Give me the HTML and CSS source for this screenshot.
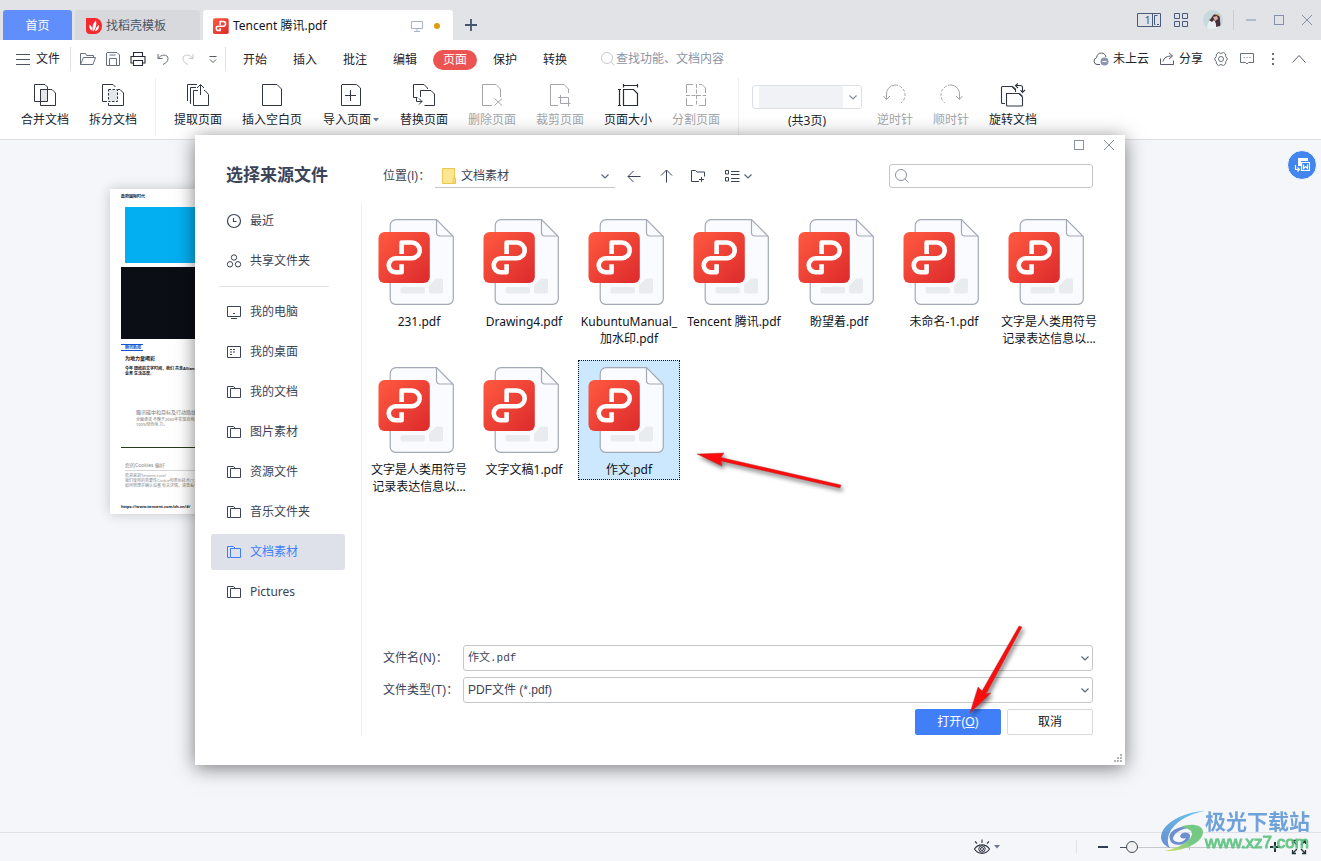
FILE: index.html
```html
<!DOCTYPE html>
<html lang="zh-CN">
<head>
<meta charset="utf-8">
<title>Tencent 腾讯.pdf</title>
<link rel="stylesheet" href="styles.css">
</head>
<body>
<svg class="defs" aria-hidden="true">
  <defs>
    <linearGradient id="red" x1="0" y1="0" x2="1" y2="1"><stop offset="0" stop-color="#ff5a40"/><stop offset="1" stop-color="#dc2a2c"/></linearGradient>
    <linearGradient id="swirl-blue" x1="0" y1="1" x2="1" y2="0"><stop offset="0" stop-color="#5b86cf"/><stop offset="1" stop-color="#5cc8f0"/></linearGradient>
    <linearGradient id="swirl-green" x1="0" y1="1" x2="1" y2="0"><stop offset="0" stop-color="#d8e05a"/><stop offset=".5" stop-color="#6cc67c"/><stop offset="1" stop-color="#6cc67c"/></linearGradient>
  </defs>
  <symbol id="pdf-file" viewBox="0 0 76 86">
    <path d="M18 .7H58.5L75.3 17.500V80a5.300 5.300 0 0 1-5.300 5.300H17.500a5.300 5.300 0 0 1-5.300-5.300V6.500A5.800 5.800 0 0 1 18 .7z" fill="#fafbfe" stroke="#a3a9b5" stroke-width="1.200"/>
    <path d="M58.500 1v12.500a3.500 3.500 0 0 0 3.500 3.500h13" fill="none" stroke="#a3a9b5" stroke-width="1.200"/>
    <rect x="22.500" y="68" width="24.500" height="6.500" rx="2" fill="#e9ecef"/>
    <path d="M58 59.500h5.500a1.500 1.500 0 0 1 1.500 1.500v11.500a2 2 0 0 1-2 2H53a2 2 0 0 1-2-2v-6z" fill="#e9ecef"/>
    <rect x=".5" y="13" width="51.300" height="51" rx="6" fill="url(#red)"/>
    <path d="M23.600 35V23.500h10.200a7.900 7.900 0 0 1 0 15.800H17.700a7 7 0 0 0 0 14h5.900v-8" fill="none" stroke="#fff" stroke-width="4.600" stroke-linejoin="round"/>
  </symbol>
  <symbol id="folders" viewBox="0 0 16 16"><path d="M4 13.500H1.500v-11h6l2 2M4.500 13.500v-9h10v9z" fill="none" stroke="currentColor"/></symbol>
  <symbol id="chevron" viewBox="0 0 12 12"><path d="M2.500 4.500 6 8l3.500-3.500" fill="none" stroke="currentColor" stroke-width="1.200"/></symbol>
  <symbol id="caret" viewBox="0 0 6 4"><path d="M0 0h6L3 3.500z" fill="currentColor"/></symbol>
  <symbol id="search" viewBox="0 0 16 16"><circle cx="7" cy="7" r="5.500" fill="none" stroke="currentColor"/><path d="m11 11 3.500 3.500" stroke="currentColor"/></symbol>
  <symbol id="square" viewBox="0 0 12 12"><rect x="1.500" y="1.500" width="9" height="9" fill="none" stroke="currentColor"/></symbol>
  <symbol id="cross" viewBox="0 0 12 12"><path d="m1 1 10 10M11 1 1 11" stroke="currentColor"/></symbol>
</svg>

<header class="tabbar">
  <button class="tab tab-home">首页</button>
  <button class="tab tab-template">
    <svg width="16" height="16" viewBox="0 0 16 16"><path d="M0 0h9a7 8 0 0 1 0 16H4a4 4 0 0 1-4-4z" fill="#f8282f"/><path d="M7.500 13.500C5.500 9.500 7 5 10 2.500c1 4-.2 8-2.500 11zM6.500 13C3.500 11.500 3 9 3.500 6.500 5.500 8 6.500 10 6.500 13zM9 13.300c.5-3 2-5 4-6.300.3 3-1 5.500-4 6.300z" fill="#fff"/></svg>
    <span>找稻壳模板</span>
  </button>
  <button class="tab tab-active">
    <svg width="16" height="16" viewBox="0 12 53 53"><rect x="0" y="13" width="52" height="52" rx="6" fill="url(#red)"/><path d="M23.600 35V23.500h10.200a7.900 7.900 0 0 1 0 15.800H17.700a7 7 0 0 0 0 14h5.900v-8" fill="none" stroke="#fff" stroke-width="5"/></svg>
    <span class="grow">Tencent 腾讯.pdf</span>
    <svg class="tab-screen" width="12" height="12" viewBox="0 0 12 12"><path d="M.5 1.500h11v7H.5zM6 8.500v3M3 11.500h6" fill="none" stroke="currentColor"/></svg>
    <i class="dot"></i>
  </button>
  <button class="new-tab" aria-label="新建"><svg width="12" height="12" viewBox="0 0 12 12"><path d="M6 0v12M0 6h12" stroke="#44546f" stroke-width="1.800"/></svg></button>
  <div class="window-tools">
    <button aria-label="窗口"><svg width="24" height="16" viewBox="0 0 24 16"><path d="M.5 1.500h23v13H.5zM15.500 1.500v13M20.500 3.500h-3v9h1M20 12.500h2" fill="none" stroke="#4a5a7c"/><text x="7.500" y="12" class="one">1</text></svg></button>
    <button aria-label="应用"><svg width="16" height="16" viewBox="0 0 16 16"><path d="M1.500 1.500h5v5h-5zM9.500 1.500h5v5h-5zM1.500 9.500h5v5h-5zM9.500 9.500h5v5h-5z" fill="none" stroke="#4a5a7c"/></svg></button>
    <svg class="avatar" width="20" height="20" viewBox="0 0 20 20"><circle cx="10" cy="10" r="10" fill="#c6dade"/><path d="M4 18c0-5 2-7 5-9l6 3 1 5a10 10 0 0 1-12 1z" fill="#e6eff2"/><path d="M6 10c3-1 3-6 7-6 4 .5 4 4 4 6 0 3 1 4 0 6l-4 1c.5-3-.5-5-2-7l-2 2z" fill="#4a3138"/><path d="m10 7 4-1 1 3-3 2z" fill="#dcaea4"/><path d="m12 4 4 1.500" stroke="#d8b75a"/></svg>
  </div>
  <div class="window-controls">
    <button aria-label="最小化"><svg width="12" height="12"><path d="M1 6h10" stroke="currentColor"/></svg></button>
    <button aria-label="最大化"><svg width="12" height="12"><use href="#square"/></svg></button>
    <button aria-label="关闭"><svg width="12" height="12"><use href="#cross"/></svg></button>
  </div>
</header>

<nav class="menubar">
  <button class="file-menu"><svg width="14" height="12" viewBox="0 0 14 12"><path d="M0 1.500h14M0 6.500h14M0 11.500h14" stroke="#4d5463"/></svg>文件</button>
  <div class="quick">
    <button aria-label="打开"><svg width="16" height="16" viewBox="0 0 16 16"><path d="M.5 13.500v-11h5l1 2h7v2M.5 13.500l3-7h12l-2.500 7z" fill="none" stroke="#69707d"/></svg></button>
    <button aria-label="保存"><svg width="16" height="16" viewBox="0 0 16 16"><path d="M2 1.500h10l2.500 2.500v10.500h-13V2zM4.500 14V7.500h7V14M4.500 4h6" fill="none" stroke="#69707d"/></svg></button>
    <button aria-label="打印"><svg width="16" height="16" viewBox="0 0 16 16"><path d="M3.500 5V1.500h9V5M3.500 12H1V5.500h14V12h-2.500M3.500 9.500h9v5h-9z" fill="none" stroke="#262b36" stroke-width="1.100"/></svg></button>
    <button aria-label="撤销"><svg width="14" height="14" viewBox="0 0 14 14"><path d="M2 2v4.500h4.500M2 6.500C5 2 12 2 12 6.500c0 3-2 4.500-5 6" fill="none" stroke="#69707d"/></svg></button>
    <button aria-label="重做"><svg width="14" height="14" viewBox="0 0 14 14"><path d="M12 2v4.500H7.500M12 6.500C9 2 2 2 2 6.500c0 3 2 4.500 5 6" fill="none" stroke="#c6c9ce"/></svg></button>
    <button aria-label="更多"><svg width="10" height="10" viewBox="0 0 10 10"><path d="M1.500 2.500h7M2 5.500l3 3 3-3" fill="none" stroke="#555c69"/></svg></button>
  </div>
  <div class="menus">
    <button>开始</button><button>插入</button><button>批注</button><button>编辑</button><button class="current"><span>页面</span></button><button>保护</button><button>转换</button>
  </div>
  <button class="find"><svg width="16" height="16"><use href="#search"/></svg>查找功能、文档内容</button>
  <div class="menu-right">
    <button class="cloud"><svg width="16" height="14" viewBox="0 0 16 14"><path d="M7 12.500H4a3.500 3.500 0 0 1-.5-6.800C4 2.500 6 1 8.300 1c2.500 0 4.200 1.800 4.700 4" fill="none" stroke="#555c69"/><circle cx="11.500" cy="9.500" r="4" fill="#8c96b0"/><path d="M9.500 9.500h4" stroke="#fff"/></svg>未上云</button>
    <button class="share"><svg width="15" height="14" viewBox="0 0 15 14"><path d="M.5 6.500v6h13v-4M3 9.500C4 5.500 7 4 12 4M9 .8 12.500 4 9 7.200" fill="none" stroke="#555c69"/></svg>分享</button>
    <button class="tool" aria-label="设置"><svg width="16" height="16" viewBox="0 0 16 16"><path d="m5.500 1.500 2.500 1 2.500-1 2 1.500.3 2.500L14.500 8l-1.700 2.500-.3 2.500-2 1.500-2.500-1-2.500 1-2-1.500-.3-2.500L1.500 8l1.700-2.500L3.500 3z" fill="none" stroke="#69707d"/><circle cx="8" cy="8" r="2.500" fill="none" stroke="#69707d"/></svg></button>
    <button class="tool" aria-label="批注"><svg width="16" height="16" viewBox="0 0 16 16"><path d="M1.500 2.500h13v9H9.500l-1.500 1.500-1.500-1.500h-5z" fill="none" stroke="#69707d"/><path d="M4.500 6.500h7" stroke="#69707d" stroke-dasharray="1 2"/></svg></button>
    <button class="tool" aria-label="更多"><svg width="4" height="12"><path d="M1 0h2v2H1zM1 5h2v2H1zM1 10h2v2H1z" fill="#69707d"/></svg></button>
    <button class="tool" aria-label="收起"><svg width="14" height="8"><path d="m.5 7.500 6.500-7 6.500 7" fill="none" stroke="#555c69"/></svg></button>
  </div>
</nav>

<section class="ribbon">
  <div class="group group-first">
    <button class="cmd"><svg width="24" height="24" viewBox="0 0 24 24"><path d="M7.500 18.500h-6v-17H12L14.500 4v2.500M7.500 6.500H19l3.500 3.500v12.500h-15z" fill="none" stroke="#303643"/><path d="M7.500 6.500h7v12h-7z" fill="#e4e6ea" stroke="#303643"/></svg>合并文档</button>
    <button class="cmd"><svg width="24" height="24" viewBox="0 0 24 24"><path d="M6 18.500H1.500v-17H12L14.500 4M17 6.500h2l3.500 3.500v12.500h-15V20" fill="none" stroke="#303643"/><path d="M7.500 6.500h9v12h-9z" fill="#e4e6ea" stroke="#303643" stroke-dasharray="2.500 1.500"/></svg>拆分文档</button>
  </div>
  <div class="group group-pages">
    <button class="cmd"><svg width="24" height="24" viewBox="0 0 24 24"><path d="M1.500 18V1.500H11M4.500 21V4.500H10M12 7.500H7.500v15h15V11.500l-3.500-4h-1M14.500 12V2M11 5l3.500-3.500L18 5" fill="none" stroke="#303643"/></svg>提取页面</button>
    <button class="cmd cmd-wide"><svg width="24" height="24" viewBox="0 0 24 24"><path d="M2.500 1.500H17L21.500 6v16.500h-19z" fill="none" stroke="#303643"/></svg>插入空白页</button>
    <button class="cmd cmd-menu"><svg width="24" height="24" viewBox="0 0 24 24"><path d="M3 1.500h14.500L21.500 5v17.500h-19V2zM11.500 7v11M6 12.500h11" fill="none" stroke="#303643"/></svg><span>导入页面<svg class="more" width="6" height="4"><use href="#caret"/></svg></span></button>
    <button class="cmd"><svg width="24" height="24" viewBox="0 0 24 24"><path d="M5.500 14.500h-4v-13H12L15.500 5v1M8.500 14V7.500H19l3.500 3.500v11.500h-10M4.500 15v3.500H10M7 15.500l3 3-3 3" fill="none" stroke="#303643"/></svg>替换页面</button>
    <button class="cmd off"><svg width="24" height="24" viewBox="0 0 24 24"><path d="M12 22.500H2.500v-21H16L20.500 6v8M14.500 15.500l7.500 7M22 15.500l-7.500 7" fill="none" stroke="currentColor"/></svg>删除页面</button>
    <button class="cmd off"><svg width="24" height="24" viewBox="0 0 24 24"><path d="M10 22.500H2.500v-21H16L20.500 6v4M12.500 12v8.500h10M10 14.500h10.500v9" fill="none" stroke="currentColor"/></svg>裁剪页面</button>
    <button class="cmd"><svg width="24" height="24" viewBox="0 0 24 24"><path d="M7.500 6.500h10l4 4v12h-14zM7 2.500h14.500M7.500 1v3.500M21.500 1v3.500M3.500 6v17M2 6.500h3M2 22.500h3" fill="none" stroke="#262b36" stroke-width="1.200"/></svg>页面大小</button>
    <button class="cmd off"><svg width="24" height="24" viewBox="0 0 24 24"><path d="M9 1.500H2.500V10M2.500 15v7.500H9M15 1.500h3L21.500 5v5M21.500 15v7.500H15" fill="none" stroke="currentColor"/><path d="M12.500 1v22M2 12.500h20" fill="none" stroke="currentColor" stroke-dasharray="4 1.500"/></svg>分割页面</button>
  </div>
  <div class="group group-rotate">
    <div class="page-pick">
      <button class="page-box" aria-label="页码"><span></span><svg width="12" height="12"><use href="#chevron"/></svg></button>
      <div>(共3页)</div>
    </div>
    <button class="cmd cmd-slim off"><svg width="24" height="24" viewBox="0 0 24 24"><path d="M3.500 16v-4a9 9 0 0 1 8.500-10" fill="none" stroke="currentColor"/><path d="M12 2a10 10 0 0 1 6 18" fill="none" stroke="currentColor" stroke-dasharray="3 1.500"/><path d="m.5 13 3 3.500 3.500-3.500" fill="none" stroke="currentColor"/></svg>逆时针</button>
    <button class="cmd cmd-slim off"><svg width="24" height="24" viewBox="0 0 24 24"><path d="M20.500 16v-4a9 9 0 0 0-8.500-10" fill="none" stroke="currentColor"/><path d="M12 2a10 10 0 0 0-6 18" fill="none" stroke="currentColor" stroke-dasharray="3 1.500"/><path d="m23.500 13-3 3.500-3.500-3.500" fill="none" stroke="currentColor"/></svg>顺时针</button>
    <button class="cmd"><svg width="26" height="24" viewBox="0 0 26 24"><path d="M5 20.500H2.500a1 1 0 0 1-1-1v-15a1 1 0 0 1 1-1h10L15.500 6v3M6.500 10.500H19l3.500 3.500v8a1 1 0 0 1-1 1h-14a1 1 0 0 1-1-1zM12 3.500l3 3M19.500 10.500l3 3" fill="none" stroke="#303643" stroke-width="1.100"/><path d="M16 2.500h4.500a2 2 0 0 1 2 2V9M18 .5l-2.500 2L18 5M20.500 7l2 2.500L25 7" fill="none" stroke="#303643" stroke-width="1.100"/></svg>旋转文档</button>
  </div>
</section>

<main class="workspace">
  <article class="thumb">
    <p class="thumb-head">政府国际时代</p>
    <div class="thumb-blue"></div>
    <div class="thumb-dark"></div>
    <p class="thumb-tag">腾讯新闻</p>
    <h2>为地力量喝彩</h2>
    <p class="thumb-bold">今年 团结的文字时间，我们 共走Alliance的Hot.cat的文字</p>
    <p class="thumb-bold">业务 生活态度。</p>
    <div class="thumb-quote"><h3>腾讯碳中和目标及行动路线报告</h3><p>全面承诺 不晚于2030年实现自身运营及供应链</p><p>100%绿色电 力。</p></div>
    <div class="thumb-rule"></div>
    <div class="thumb-note"><h3>您的Cookies 偏好</h3><p>欢迎来到Tencent.com!</p><p>我们使用的重要性Cookie和类似技术("Cookie")来改善您的体验</p><p>如何管理并确认设置 有关详情，请查看我们的Cookie政策</p></div>
    <p class="thumb-foot">https://www.tencent.com/zh-cn/#/</p>
  </article>
  <button class="float" aria-label="转为Word"><svg width="16" height="16" viewBox="0 0 16 16"><path d="M4 1h10v3H7v5H4z" fill="#fff"/><path d="M7.500 5.500h8v8h-8zM9.500 7.500v4l2-2 2 2v-4M1.500 8v4.500H6M3.500 10.500l2 2-2 2" fill="none" stroke="#fff" stroke-width="1.200"/></svg></button>
</main>

<footer class="statusbar">
  <button class="eye" aria-label="视图"><svg width="16" height="16" viewBox="0 0 16 16"><path d="M.5 10C4 4.500 12 4.500 15.500 10 12 15.800 4 15.800.5 10zM8 4V.5M3 4.500 1 2.500M13 4.500l2-2" fill="none" stroke="#303643" stroke-width="1.100"/><circle cx="8" cy="10" r="3.200" fill="none" stroke="#303643"/><circle cx="8" cy="10" r="1.500" fill="none" stroke="#303643"/></svg><svg class="more" width="6" height="4"><use href="#caret"/></svg></button>
  <div class="zoom">
    <button aria-label="缩小"><svg width="10" height="10"><path d="M0 5h10" stroke="#303c55" stroke-width="2"/></svg></button>
    <input type="range" min="0" max="100" value="5" aria-label="缩放">
    <button aria-label="放大"><svg width="10" height="10"><path d="M0 5h10M5 0v10" stroke="#22333a" stroke-width="2"/></svg></button>
    <button aria-label="全屏"><svg width="16" height="16" viewBox="0 0 16 16"><path d="M1.500 5V1.500H5M11 1.500h3.500V5M14.500 11v3.500H11M5 14.500H1.500V11M2 2l4 4M14 2l-4 4M14 14l-4-4M2 14l4-4" fill="none" stroke="#22333a" stroke-width="1.300"/></svg></button>
  </div>
</footer>

<section class="dialog" role="dialog" aria-labelledby="dialog-title">
  <div class="dialog-controls">
    <button aria-label="最大化"><svg width="12" height="12"><use href="#square"/></svg></button>
    <button aria-label="关闭"><svg width="12" height="12"><use href="#cross"/></svg></button>
  </div>
  <div class="dialog-head">
    <h1 id="dialog-title">选择来源文件</h1>
    <label for="place">位置(I)：</label>
    <div class="place">
      <svg width="14" height="16" viewBox="0 0 14 16"><path d="M.5.500h12v9l1 1v5H.5z" fill="#ffe694" stroke="#ebc64f"/><path d="M11 15v-5l2-1v6z" fill="#ffdf7c" stroke="#ebc64f" stroke-width=".8"/></svg>
      <select id="place"><option>文档素材</option></select>
      <svg class="drop" width="12" height="12"><use href="#chevron"/></svg>
    </div>
    <div class="nav-tools">
      <button aria-label="后退"><svg width="14" height="14" viewBox="0 0 14 14"><path d="M13.500 7.500H1M6.500 2 1 7.500 6.500 13" fill="none" stroke="currentColor"/></svg></button>
      <button aria-label="向上"><svg width="14" height="14" viewBox="0 0 14 14"><path d="M7.500 13.500V1M2 6.500 7.500 1 13 6.500" fill="none" stroke="currentColor"/></svg></button>
      <button aria-label="新建文件夹"><svg width="14" height="14" viewBox="0 0 14 14"><path d="M8 12.500H.5V1.500h4l1.500 1.500h7.500v4.500M10.500 8v5M8 10.500h5" fill="none" stroke="currentColor"/></svg></button>
      <button class="view" aria-label="视图"><svg width="15" height="12" viewBox="0 0 15 12"><path d="M.5.500h3v3.500h-3zM.5 7.500h3V11h-3zM6 1.500h8.500M6 4.500h8.500M6 8.500h8.500M6 11.500h8.500" fill="none" stroke="currentColor"/></svg><svg class="drop" width="12" height="12"><use href="#chevron"/></svg></button>
    </div>
    <div class="search"><svg width="16" height="16"><use href="#search"/></svg><input type="text" aria-label="搜索"></div>
  </div>
  <div class="dialog-body">
    <nav class="side">
      <button><svg width="16" height="16" viewBox="0 0 16 16"><circle cx="8" cy="8" r="6.500" fill="none" stroke="currentColor" stroke-width="1.200"/><path d="M7.500 5v3.500h3" fill="none" stroke="currentColor" stroke-width="1.100"/></svg>最近</button>
      <button><svg width="16" height="16" viewBox="0 0 16 16"><circle cx="8" cy="4.500" r="2.700" fill="none" stroke="currentColor"/><circle cx="4" cy="11.300" r="2.700" fill="none" stroke="currentColor"/><circle cx="12" cy="11.300" r="2.700" fill="none" stroke="currentColor"/></svg>共享文件夹</button>
      <hr>
      <button><svg width="16" height="16" viewBox="0 0 16 16"><path d="M1.500 2.500h13v10h-13zM5 14.500h6M7 9.500h2" fill="none" stroke="currentColor"/></svg>我的电脑</button>
      <button><svg width="16" height="16" viewBox="0 0 16 16"><path d="M1.500 2.500h13v11h-13z" fill="none" stroke="currentColor"/><path d="M4 5.500h5M4 8h5M4 10.500h2.500" stroke="currentColor" stroke-dasharray="2 1"/></svg>我的桌面</button>
      <button><svg width="16" height="16"><use href="#folders"/></svg>我的文档</button>
      <button><svg width="16" height="16"><use href="#folders"/></svg>图片素材</button>
      <button><svg width="16" height="16"><use href="#folders"/></svg>资源文件</button>
      <button><svg width="16" height="16"><use href="#folders"/></svg>音乐文件夹</button>
      <button class="selected"><svg width="16" height="16"><use href="#folders"/></svg>文档素材</button>
      <button><svg width="16" height="16"><use href="#folders"/></svg>Pictures</button>
    </nav>
    <div class="content">
      <div class="files">
        <button class="file"><svg width="76" height="86"><use href="#pdf-file"/></svg>231.pdf</button>
        <button class="file"><svg width="76" height="86"><use href="#pdf-file"/></svg>Drawing4.pdf</button>
        <button class="file"><svg width="76" height="86"><use href="#pdf-file"/></svg>KubuntuManual_<br>加水印.pdf</button>
        <button class="file"><svg width="76" height="86"><use href="#pdf-file"/></svg>Tencent 腾讯.pdf</button>
        <button class="file"><svg width="76" height="86"><use href="#pdf-file"/></svg>盼望着.pdf</button>
        <button class="file"><svg width="76" height="86"><use href="#pdf-file"/></svg>未命名-1.pdf</button>
        <button class="file"><svg width="76" height="86"><use href="#pdf-file"/></svg>文字是人类用符号<br>记录表达信息以...</button>
        <button class="file"><svg width="76" height="86"><use href="#pdf-file"/></svg>文字是人类用符号<br>记录表达信息以...</button>
        <button class="file"><svg width="76" height="86"><use href="#pdf-file"/></svg>文字文稿1.pdf</button>
        <button class="file file-on"><svg width="76" height="86"><use href="#pdf-file"/></svg>作文.pdf</button>
      </div>
      <form class="fields">
        <label for="name">文件名(N)：</label>
        <div class="field"><input id="name" class="name" type="text" value="作文.pdf"><svg class="drop" width="12" height="12"><use href="#chevron"/></svg></div>
        <label for="type">文件类型(T)：</label>
        <div class="field"><select id="type"><option>PDF文件 (*.pdf)</option></select><svg class="drop" width="12" height="12"><use href="#chevron"/></svg></div>
        <div class="actions"><button type="button" class="primary">打开(<u>O</u>)</button><button type="button">取消</button></div>
      </form>
    </div>
  </div>
  <svg class="grip" width="8" height="8"><path d="M6 0h2v2H6zM3 3h2v2H3zM6 3h2v2H6zM0 6h2v2H0zM3 6h2v2H3zM6 6h2v2H6z" fill="#b4b4b4"/></svg>
  <svg class="arrow arrow-file" width="146" height="40" viewBox="0 0 146 40"><path d="M0 2 27 1l-3 4.500L144 33l-1 3L24 9l1 5z" fill="#fb0d0d" stroke="#a33" stroke-width=".4"/></svg>
  <svg class="arrow arrow-open" width="54" height="90" viewBox="0 0 54 90"><path d="M0 88 8 62l4 4L49 1l3 1-36 67 5-1z" fill="#fb0d0d" stroke="#a33" stroke-width=".4"/></svg>
</section>

<div class="mark">
  <svg width="44" height="42" viewBox="0 0 44 42">
    <path d="M44 1C22 2 1 13 0 27c0 5 4 9 9 11C2 27 12 7 44 1z" fill="url(#swirl-blue)"/>
    <path d="M11 33C2 22 19 12 40 18 28 16 14 20 12 28c0 5 10 6 13 0-3 1-6 0-6-2 2-5 9-4 10-1 1 7-10 13-18 8z" fill="#6287cf"/>
    <path d="M20 17c8-4 22-3 22 5 0 10-18 20-39 19 15-3 27-10 28-17 0-4-5-6-11-7z" fill="url(#swirl-green)"/>
  </svg>
  <div><strong>极光下载站</strong><span>www.xz7.com</span></div>
</div>
</body>
</html>
```
FILE: styles.css
```css
* { box-sizing: border-box; }
body {
  margin: 0;
  min-height: 100vh;
  display: flex;
  flex-direction: column;
  position: relative;
  overflow: hidden;
  background: #f5f6f9;
  color: #20242e;
  font: 12px/16px "Noto Sans", "Noto Sans CJK SC", sans-serif;
}
button, input, select {
  margin: 0;
  padding: 0;
  border: 0;
  background: none;
  color: inherit;
  font: inherit;
}
button {
  display: flex;
  align-items: center;
  justify-content: center;
  white-space: nowrap;
}
svg { flex: none; display: block; }
h1, h2, h3, p { margin: 0; }
.defs { position: absolute; width: 0; height: 0; }
.drop { color: #59647f; }

/* Tabs */
.tabbar {
  display: flex;
  align-items: flex-end;
  gap: 3px;
  height: 40px;
  padding-left: 3px;
  background: #e1e3e7;
}
.tab { height: 30px; padding-top: 2px; border-radius: 3px 3px 0 0; }
.tab-home { width: 69px; background: #608efb; color: #fff; }
.tab-template {
  width: 125px;
  padding-left: 11px;
  gap: 4px;
  justify-content: flex-start;
  background: #d7d9dd;
  color: #4b5568;
}
.tab-active {
  width: 250px;
  padding: 2px 13px 0 10px;
  gap: 4px;
  background: #fff;
  color: #10131a;
}
.grow { flex: 1; text-align: left; }
.tab-screen { color: #a9b3cb; }
.dot { width: 6px; height: 6px; margin-left: 7px; border-radius: 50%; background: #e09a10; }
.new-tab { width: 30px; height: 30px; }
.window-tools { display: flex; align-items: center; gap: 12px; height: 40px; margin-left: auto; }
.one { fill: #4a5a7c; font-size: 11px; }
.avatar { margin-left: 2px; }
.window-controls {
  display: flex;
  align-items: center;
  height: 20px;
  margin: 0 0 10px 7px;
  padding-left: 3px;
  border-left: 1px solid #c9ccd4;
  color: #8490ab;
}
.window-controls button { width: 28px; height: 20px; }

/* Menu */
.menubar { display: flex; align-items: center; height: 38px; padding: 0 9px 0 16px; background: #fff; }
.file-menu { gap: 6px; height: 24px; padding-right: 10px; border-right: 1px solid #dfe1e6; }
.quick { display: flex; height: 24px; padding: 0 0 0 4px; border-right: 1px solid #dfe1e6; }
.quick button { width: 25px; }
.menus { display: flex; margin-left: 4px; }
.menus button { width: 50px; height: 24px; padding-top: 1px; }
.current span { width: 44px; line-height: 20px; border-radius: 10px; background: #eb5450; color: #fff; }
.find { margin-left: 20px; color: #8a94a8; }
.find svg { color: #c5c9d0; }
.menu-right { display: flex; align-items: center; margin-left: auto; }
.cloud { gap: 4px; margin-right: 11px; }
.share { gap: 4px; margin-right: 5px; }
.tool { width: 26px; height: 24px; }

/* Ribbon */
.ribbon { display: flex; height: 62px; background: #fff; border-bottom: 1px solid #dddfe3; }
.group { display: flex; align-items: flex-start; height: 58px; }
.group-first { padding: 0 8px 0 11px; }
.group-pages { padding: 0 8px; }
.group + .group { border-left: 1px solid #eceef1; }
.group-rotate { padding-left: 13px; }
.cmd { flex-direction: column; gap: 5px; width: 68px; padding-top: 5px; }
.cmd-wide { width: 80px; }
.cmd-menu { width: 78px; }
.cmd-menu span { display: flex; align-items: center; gap: 2px; }
.cmd-slim { width: 56px; }
.more { color: #6b7690; }
.off { color: #a5a6a9; }
.page-pick { width: 110px; margin-right: 5px; padding-top: 7px; text-align: center; }
.page-box {
  width: 100%;
  height: 24px;
  margin-bottom: 4px;
  padding: 0 2px 0 6px;
  gap: 4px;
  border: 1px solid #dcdfe4;
  border-radius: 3px;
  color: #8790a0;
}
.page-box span { flex: 1; height: 22px; background: #f1f2f5; }

/* Workspace */
.workspace { display: flex; flex: 1; align-items: flex-start; justify-content: space-between; padding: 9px 4px 0 110px; }
.thumb {
  width: 230px;
  height: 325px;
  margin-top: 40px;
  padding: 5px 0 0 11px;
  overflow: hidden;
  background: #fff;
  box-shadow: 0 0 12px rgba(0, 0, 0, .2);
  color: #15181e;
  font-size: 4px;
  line-height: 5px;
  white-space: nowrap;
}
.thumb-head { font-weight: 700; }
.thumb-blue { height: 56px; margin: 8px 15px 0 4px; background: #04aff1; }
.thumb-dark { height: 72px; margin: 4px 11px 5px 0; background: #0c0e16; }
.thumb-tag { width: 22px; padding-left: 4px; border: solid #1554d1; border-width: 1px 0; color: #1554d1; font-weight: 700; }
.thumb h2 { margin: 4px 0 5px 4px; font-size: 5px; line-height: 6px; }
.thumb-bold { padding-left: 4px; font-weight: 700; }
.thumb h3 { font-size: 5px; line-height: 9px; font-weight: 400; }
.thumb-quote { margin: 32px 0 20px 15px; color: #777; }
.thumb-rule { height: 1px; margin-right: 11px; background: #263d18; }
.thumb-note { margin: 13px 11px 16px 4px; color: #888; }
.thumb-note h3 { margin-bottom: 2px; border-bottom: 1px solid #d6d6d6; }
.thumb-foot { font-weight: 700; }
.float {
  width: 30px;
  height: 30px;
  margin-top: 1px;
  border: 1px solid #fff;
  border-radius: 50%;
  background: #4285ef;
}

/* Status */
.statusbar {
  display: flex;
  align-items: center;
  justify-content: flex-end;
  gap: 76px;
  height: 29px;
  padding-right: 10px;
  border-top: 1px solid #dfe1e6;
}
.eye { gap: 4px; }
.zoom { display: flex; align-items: center; height: 14px; padding-left: 14px; border-left: 1px solid #dfe1e6; }
.zoom button { width: 24px; height: 24px; }
.zoom input {
  appearance: none;
  width: 138px;
  height: 14px;
  margin: 0 5px;
  background:
    linear-gradient(#bfc3c9, #bfc3c9) center / 1px 6px no-repeat,
    linear-gradient(#4d535e, #4d535e) left center / 8px 1px no-repeat,
    linear-gradient(#c5c8cd, #c5c8cd) center / 100% 1px no-repeat;
}
.zoom input::-webkit-slider-thumb {
  appearance: none;
  width: 12px;
  height: 12px;
  border: 1px solid #444a55;
  border-radius: 50%;
  background: #f0f0f0;
}

/* Dialog */
.dialog {
  position: absolute;
  top: 135px;
  left: 195px;
  right: 196px;
  height: 630px;
  display: flex;
  flex-direction: column;
  padding-bottom: 29px;
  background: #fff;
  box-shadow: 0 3px 18px rgba(0, 0, 0, .5);
  color: #3b4356;
}
.dialog-controls { display: flex; justify-content: flex-end; height: 20px; padding-right: 1px; color: #8790a5; }
.dialog-controls button { width: 30px; height: 20px; }
.dialog-head { display: flex; align-items: center; height: 42px; margin-bottom: 6px; padding: 0 32px 0 31px; }
.dialog-head label { width: 52px; }
h1 { width: 157px; color: #3a4357; font-size: 17px; line-height: 24px; font-weight: 700; }
label, .fields, .dialog-head { font-family: "Liberation Sans", "Noto Sans CJK SC", sans-serif; }
label { white-space: nowrap; }
select { appearance: none; flex: 1; min-width: 0; }
.place { display: flex; align-items: center; gap: 5px; width: 180px; height: 24px; padding: 0 4px 0 7px; border-bottom: 1px solid #c4c6ca; }
.nav-tools { display: flex; margin-left: 3px; }
.nav-tools button { width: 32px; height: 24px; }
.nav-tools .view { width: 50px; gap: 2px; }
.search { display: flex; align-items: center; flex: 0 1 204px; height: 24px; margin-left: auto; padding: 0 4px; border: 1px solid #c4c6ca; border-radius: 3px; color: #8790a0; }
.search input { flex: 1; min-width: 0; }
.dialog-body { display: flex; flex: 1; min-height: 0; }
.side { width: 167px; padding: 0 16px; border-right: 1px solid #eceef1; }
.side button { width: 100%; height: 36px; margin-bottom: 4px; padding-left: 15px; gap: 8px; justify-content: flex-start; border-radius: 3px; }
.side hr { height: 1px; margin: 7px 16px 7px 8px; border: 0; background: #e0e2e6; }
.side .selected { background: #dee1e9; color: #417ff9; }
.content { display: flex; flex: 1; flex-direction: column; min-width: 0; }
.files { flex: 1; display: grid; grid-template-columns: repeat(auto-fill, 105px); grid-auto-rows: 148px; align-content: start; align-items: start; padding: 9px 0 0 6px; }
.file { display: block; width: 102px; height: 120px; padding: 7px 0 2px; color: #10131a; line-height: 17px; text-align: center; }
.file svg { margin: 0 auto 8px 10px; }
.file-on { background: #cce8ff; outline: 1px dotted #111; outline-offset: -1px; }
.fields { display: grid; grid-template-columns: 80px 1fr; gap: 6px 0; align-items: center; padding: 0 32px 1px 21px; }
.field { display: flex; align-items: center; height: 26px; padding: 0 1px 0 4px; border: 1px solid #c4c6ca; border-radius: 3px; }
.field input { flex: 1; min-width: 0; }
.name { font: 11px/16px "Liberation Mono", "Noto Sans CJK SC", monospace; }
.actions { grid-column: 2; display: flex; justify-content: flex-end; gap: 6px; }
.actions button { width: 86px; height: 26px; border: 1px solid #d6d9e0; border-radius: 2px; color: #10131a; }
.actions .primary { border-color: #417ff9; background: #417ff9; color: #fff; }
.grip { position: absolute; right: 3px; bottom: 3px; }
.arrow { position: absolute; overflow: visible; filter: drop-shadow(2px 3px 2px rgba(0, 0, 0, .5)); }
.arrow-file { left: 502px; top: 317px; }
.arrow-open { right: 101px; bottom: 50px; }

/* Site mark */
.mark { position: absolute; right: 11px; bottom: 8px; display: flex; align-items: center; opacity: .92; }
.mark div { display: flex; flex-direction: column; }
.mark strong { color: #659bd8; font-size: 21px; line-height: 24px; }
.mark span { color: #5fc480; font: 17px/20px "Liberation Sans", sans-serif; -webkit-text-stroke: 1px #5fc480; }
```
